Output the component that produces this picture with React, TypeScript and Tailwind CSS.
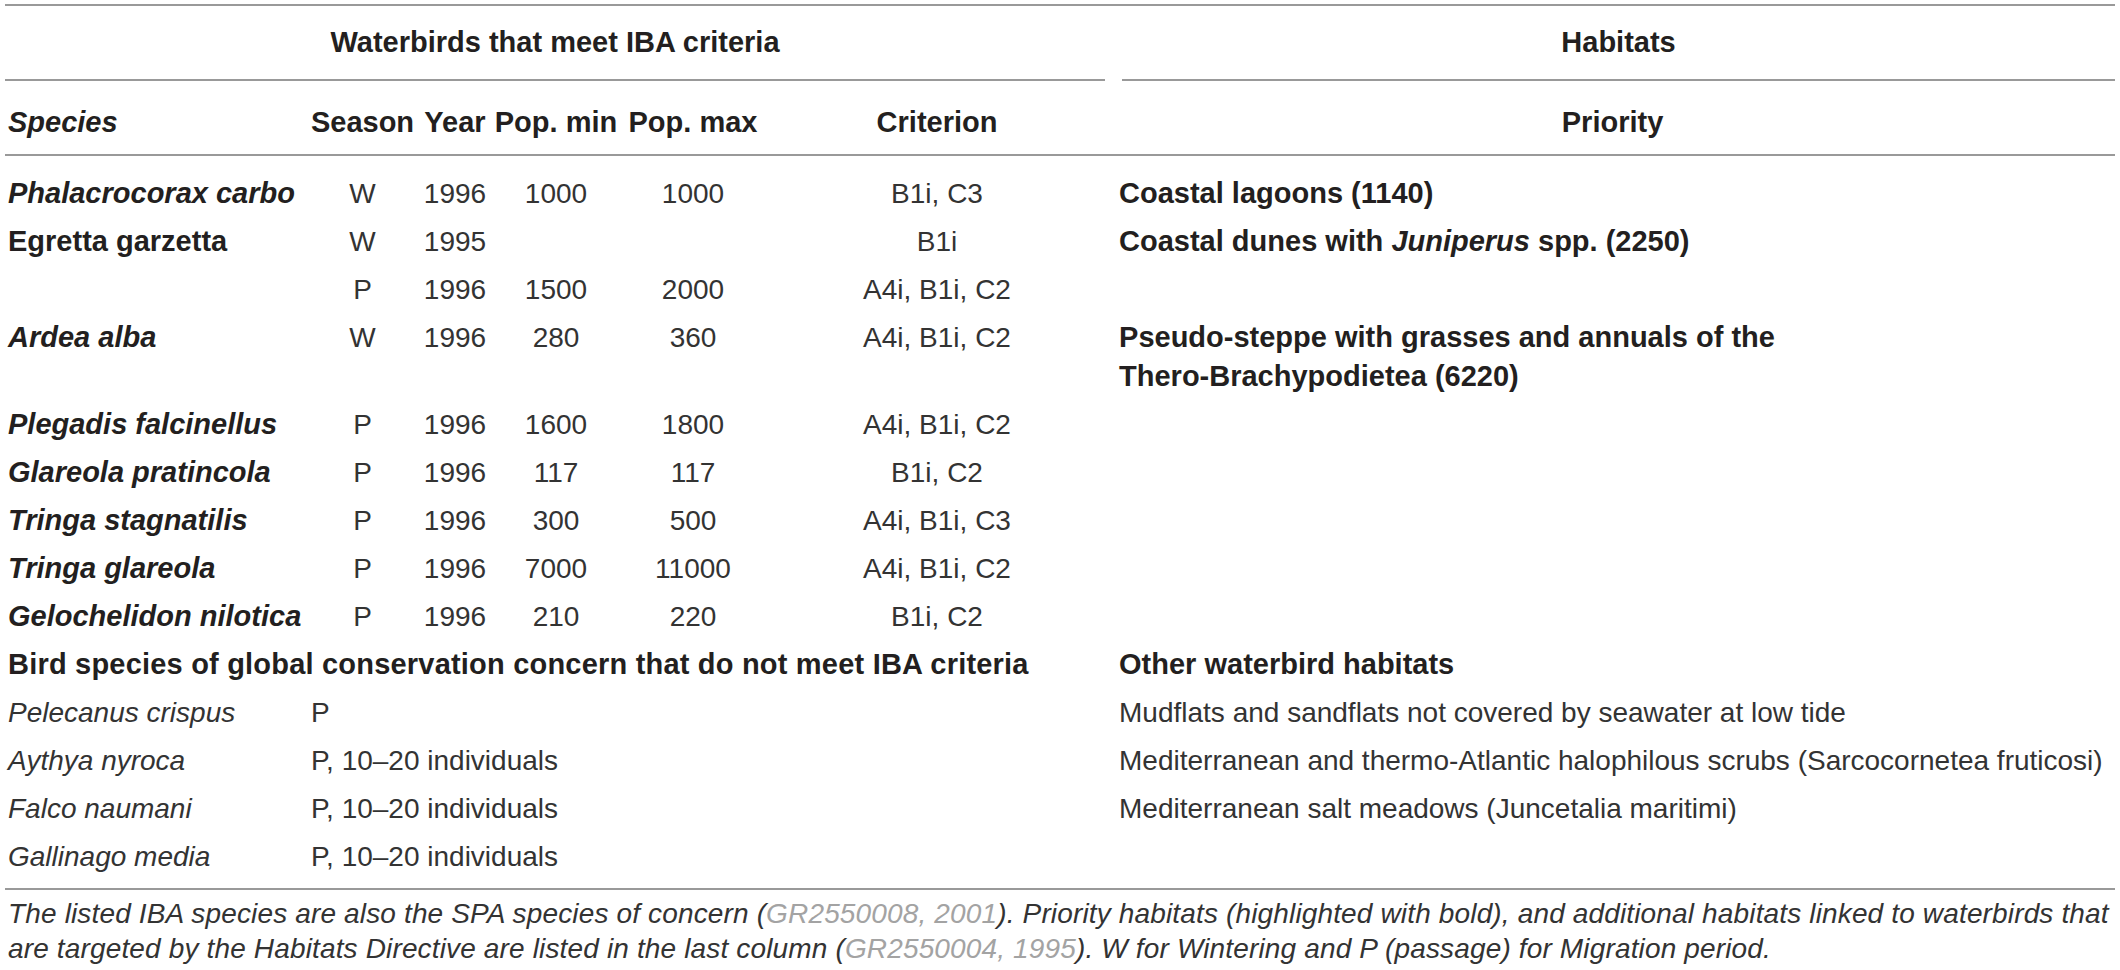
import type { ReactNode } from "react";

type Row = {
  species: string;
  style?: "bi" | "b";
  season: string;
  year: string;
  min: string;
  max: string;
  crit: string;
  habitat?: ReactNode;
};

const ibaRows: Row[] = [
  { species: "Phalacrocorax carbo", style: "bi", season: "W", year: "1996", min: "1000", max: "1000", crit: "B1i, C3", habitat: <>Coastal lagoons (1140)</> },
  {
    species: "Egretta garzetta",
    style: "b",
    season: "W",
    year: "1995",
    min: "",
    max: "",
    crit: "B1i",
    habitat: (
      <>
        Coastal dunes with <i>Juniperus</i> spp. (2250)
      </>
    ),
  },
  { species: "", season: "P", year: "1996", min: "1500", max: "2000", crit: "A4i, B1i, C2" },
  {
    species: "Ardea alba",
    style: "bi",
    season: "W",
    year: "1996",
    min: "280",
    max: "360",
    crit: "A4i, B1i, C2",
    habitat: (
      <>
        Pseudo-steppe with grasses and annuals of the
        <br />
        Thero-Brachypodietea (6220)
      </>
    ),
  },
  { species: "Plegadis falcinellus", style: "bi", season: "P", year: "1996", min: "1600", max: "1800", crit: "A4i, B1i, C2" },
  { species: "Glareola pratincola", style: "bi", season: "P", year: "1996", min: "117", max: "117", crit: "B1i, C2" },
  { species: "Tringa stagnatilis", style: "bi", season: "P", year: "1996", min: "300", max: "500", crit: "A4i, B1i, C3" },
  { species: "Tringa glareola", style: "bi", season: "P", year: "1996", min: "7000", max: "11000", crit: "A4i, B1i, C2" },
  { species: "Gelochelidon nilotica", style: "bi", season: "P", year: "1996", min: "210", max: "220", crit: "B1i, C2" },
];

const otherRows = [
  { species: "Pelecanus crispus", note: "P", habitat: "Mudflats and sandflats not covered by seawater at low tide" },
  { species: "Aythya nyroca", note: "P, 10–20 individuals", habitat: "Mediterranean and thermo-Atlantic halophilous scrubs (Sarcocornetea fruticosi)" },
  { species: "Falco naumani", note: "P, 10–20 individuals", habitat: "Mediterranean salt meadows (Juncetalia maritimi)" },
  { species: "Gallinago media", note: "P, 10–20 individuals", habitat: "" },
];

const cell = "py-[4.5px] align-top leading-[39px]";
const num = `${cell} text-center text-[28px] text-[#333]`;

export default function App() {
  return (
    <div className="min-h-screen bg-white px-[5px] pt-[4px] font-['Liberation_Sans',Arial,sans-serif] text-[#231f20]">
      <table className="w-[2110px] table-fixed border-collapse border-t-2 border-[#999]">
        <colgroup>
          <col className="w-[300px]" />
          <col className="w-[115px]" />
          <col className="w-[70px]" />
          <col className="w-[132px]" />
          <col className="w-[142px]" />
          <col className="w-[346px]" />
          <col className="w-[1005px]" />
        </colgroup>
        <thead>
          <tr>
            <th colSpan={6} className="p-0 text-[29px] font-bold">
              <div className="mr-[5px] flex h-[75px] items-center justify-center border-b-2 border-[#999]">
                Waterbirds that meet IBA criteria
              </div>
            </th>
            <th className="p-0 text-[29px] font-bold">
              <div className="ml-[12px] flex h-[75px] items-center justify-center border-b-2 border-[#999]">
                Habitats
              </div>
            </th>
          </tr>
          <tr className="h-[74px] border-b-2 border-[#999] text-[29px] font-bold">
            <th className="pl-[3px] pt-[10px] text-left italic">Species</th>
            <th className="pt-[10px] text-center">Season</th>
            <th className="pt-[10px] text-center">Year</th>
            <th className="pt-[10px] text-center">Pop. min</th>
            <th className="pt-[10px] text-center">Pop. max</th>
            <th className="pt-[10px] text-center">Criterion</th>
            <th className="pt-[10px] text-center">Priority</th>
          </tr>
        </thead>
        <tbody>
          <tr className="h-[14px]">
            <td colSpan={7} />
          </tr>
          {ibaRows.map((r, i) => (
            <tr key={i}>
              <td
                className={`${cell} whitespace-nowrap pl-[3px] text-[29px] font-bold ${r.style === "bi" ? "italic" : ""}`}
              >
                {r.species}
              </td>
              <td className={num}>{r.season}</td>
              <td className={num}>{r.year}</td>
              <td className={num}>{r.min}</td>
              <td className={num}>{r.max}</td>
              <td className={num}>{r.crit}</td>
              <td className={`${cell} pl-[9px] text-[29px] font-bold`}>{r.habitat}</td>
            </tr>
          ))}
          <tr>
            <td colSpan={6} className={`${cell} whitespace-nowrap pl-[3px] text-[29px] font-bold tracking-[0.2px]`}>
              Bird species of global conservation concern that do not meet IBA criteria
            </td>
            <td className={`${cell} pl-[9px] text-[29px] font-bold`}>Other waterbird habitats</td>
          </tr>
          {otherRows.map((r) => (
            <tr key={r.species}>
              <td className={`${cell} whitespace-nowrap pl-[3px] text-[28px] italic text-[#333]`}>{r.species}</td>
              <td colSpan={5} className={`${cell} whitespace-nowrap pl-[6px] text-[28px] text-[#333]`}>
                {r.note}
              </td>
              <td className={`${cell} whitespace-nowrap pl-[9px] text-[28px] text-[#333]`}>{r.habitat}</td>
            </tr>
          ))}
          <tr className="h-[9px] border-b-2 border-[#999]">
            <td colSpan={7} />
          </tr>
        </tbody>
      </table>

      <div className="pl-[3px] pt-[6px] text-[28px] italic leading-[35px] tracking-[0.15px] text-[#333]">
        <p className="whitespace-nowrap">
          The listed IBA species are also the SPA species of concern (
          <span className="text-[#a3a3a3]">GR2550008, 2001</span>). Priority habitats (highlighted with bold), and
          additional habitats linked to waterbirds that
        </p>
        <p className="whitespace-nowrap">
          are targeted by the Habitats Directive are listed in the last column (
          <span className="text-[#a3a3a3]">GR2550004, 1995</span>). W for Wintering and P (passage) for Migration
          period.
        </p>
      </div>
    </div>
  );
}
